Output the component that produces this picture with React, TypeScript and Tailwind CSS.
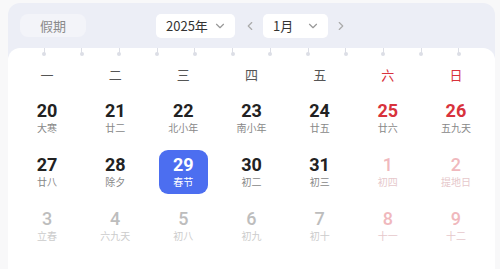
import React from 'react';
import { ChevronDown, ChevronLeft, ChevronRight } from 'lucide-react';

type Day = { n: number; lunar: string; weekend?: boolean; faded?: boolean; selected?: boolean };

const weekdays = ['一', '二', '三', '四', '五', '六', '日'];

const rows: Day[][] = [
  [
    { n: 20, lunar: '大寒' },
    { n: 21, lunar: '廿二' },
    { n: 22, lunar: '北小年' },
    { n: 23, lunar: '南小年' },
    { n: 24, lunar: '廿五' },
    { n: 25, lunar: '廿六', weekend: true },
    { n: 26, lunar: '五九天', weekend: true },
  ],
  [
    { n: 27, lunar: '廿八' },
    { n: 28, lunar: '除夕' },
    { n: 29, lunar: '春节', selected: true },
    { n: 30, lunar: '初二' },
    { n: 31, lunar: '初三' },
    { n: 1, lunar: '初四', weekend: true, faded: true },
    { n: 2, lunar: '提地日', weekend: true, faded: true },
  ],
  [
    { n: 3, lunar: '立春', faded: true },
    { n: 4, lunar: '六九天', faded: true },
    { n: 5, lunar: '初八', faded: true },
    { n: 6, lunar: '初九', faded: true },
    { n: 7, lunar: '初十', faded: true },
    { n: 8, lunar: '十一', weekend: true, faded: true },
    { n: 9, lunar: '十二', weekend: true, faded: true },
  ],
];

const cjk = "font-['Noto_Sans_CJK_SC',sans-serif]";

const DayCell = ({ d }: { d: Day }) => {
  let numColor = 'text-[#222]';
  let lunarColor = 'text-[#888]';
  if (d.weekend) numColor = 'text-[#d8323c]';
  if (d.faded) {
    numColor = d.weekend ? 'text-[#f0b8bd]' : 'text-[#bdbdbd]';
    lunarColor = d.weekend ? 'text-[#e6c8cb]' : 'text-[#cccccc]';
  }
  if (d.selected) {
    numColor = 'text-white';
    lunarColor = 'text-white';
  }
  return (
    <div className="flex justify-center">
      <div
        className={`w-[49px] h-[44px] rounded-[9px] flex flex-col items-center pt-[6px] ${d.selected ? 'bg-[#4c6ef0]' : ''}`}
      >
        <span className={`font-['Roboto',sans-serif] text-[18px] leading-[18px] ${d.faded ? 'font-medium' : 'font-bold'} ${numColor}`}>
          {d.n}
        </span>
        <span className={`${cjk} mt-[2px] text-[10px] leading-[11px] ${lunarColor}`}>{d.lunar}</span>
      </div>
    </div>
  );
};

export default function App() {
  return (
    <div className="w-[500px] h-[269px] overflow-hidden bg-[#f8f8f9] pl-2 pr-[5px] pt-[3px]">
      <div className="h-full flex flex-col rounded-t-[12px] bg-[#eceef6]">
        {/* 顶部选择栏 */}
        <div className={`h-[45px] flex items-center pl-3 ${cjk}`}>
          <button className="w-[66px] h-[23px] rounded-[8px] bg-[#f3f4f9] text-[13px] text-[#8a8a8a]">假期</button>
          <div className="ml-[70px] w-[79px] h-[24px] rounded-[5px] bg-white flex items-center justify-between pl-[10px] pr-[8px]">
            <span className="text-[13px] text-[#333]">2025年</span>
            <ChevronDown size={14} className="text-[#999]" />
          </div>
          <ChevronLeft size={14} className="text-[#aaa] ml-[8px]" />
          <div className="ml-[6px] w-[65px] h-[24px] rounded-[5px] bg-white flex items-center justify-between pl-[10px] pr-[8px]">
            <span className="text-[13px] text-[#333]">1月</span>
            <ChevronDown size={14} className="text-[#999]" />
          </div>
          <ChevronRight size={14} className="text-[#aaa] ml-[6px]" />
        </div>

        {/* 日历主体 */}
        <div className="flex-1 bg-white rounded-t-[12px] px-[5px]">
          <div className="h-[9px] flex justify-between px-[29px]">
            {Array.from({ length: 12 }).map((_, i) => (
              <div key={i} className="flex flex-col items-center">
                <div className="w-px h-[5px] bg-[#dcdee6]" />
                <div className="w-[4px] h-[4px] rounded-full bg-[#dcdee6] -mt-[1px]" />
              </div>
            ))}
          </div>
          <div className={`mt-[8px] grid grid-cols-7 h-[20px] items-center ${cjk}`}>
            {weekdays.map((w, i) => (
              <div key={w} className={`text-center text-[13px] ${i >= 5 ? 'text-[#d8323c]' : 'text-[#555]'}`}>
                {w}
              </div>
            ))}
          </div>
          <div className="mt-[11px] flex flex-col gap-[10px]">
            {rows.map((r, ri) => (
              <div key={ri} className="grid grid-cols-7">
                {r.map((d) => (
                  <DayCell key={d.n} d={d} />
                ))}
              </div>
            ))}
          </div>
        </div>
      </div>
    </div>
  );
}
